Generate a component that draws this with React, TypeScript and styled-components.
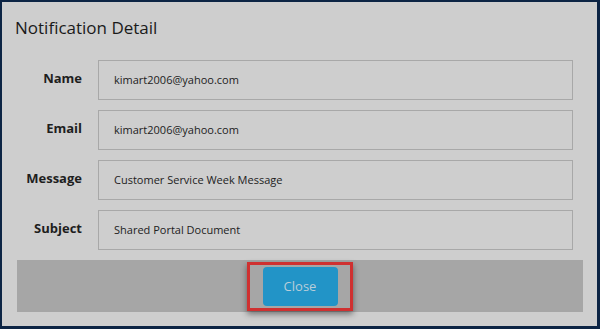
import React from "react"
import styled, { createGlobalStyle } from "styled-components"

const GlobalStyle = createGlobalStyle`
  html, body {
    margin: 0;
    padding: 0;
    background: #cecece;
  }
  body {
    font-family: "Open Sans", "Liberation Sans", sans-serif;
  }
`

const fields = [
  { label: "Name", value: "kimart2006@yahoo.com" },
  { label: "Email", value: "kimart2006@yahoo.com" },
  { label: "Message", value: "Customer Service Week Message" },
  { label: "Subject", value: "Shared Portal Document" },
]

export default function App() {
  return (
    <>
      <GlobalStyle />
      <Styled.Modal>
        <Styled.Title>Notification Detail</Styled.Title>
        <Styled.Form>
          {fields.map((f) => (
            <Styled.Row key={f.label}>
              <Styled.Label>{f.label}</Styled.Label>
              <Styled.Field>{f.value}</Styled.Field>
            </Styled.Row>
          ))}
        </Styled.Form>
        <Styled.Footer>
          <Styled.Highlight>
            <Styled.Button>Close</Styled.Button>
          </Styled.Highlight>
        </Styled.Footer>
      </Styled.Modal>
    </>
  )
}

const Styled = {
  Modal: styled.div`
    box-sizing: border-box;
    width: 600px;
    height: 329px;
    background: #cecece;
    border-style: solid;
    border-color: #0c2444;
    border-width: 2px 3px 3px 2px;
    display: flex;
    flex-direction: column;
  `,
  Title: styled.h2`
    margin: 0;
    height: 58px;
    box-sizing: border-box;
    padding: 14px 0 0 13px;
    font-size: 17px;
    line-height: 23px;
    font-weight: 500;
    color: #1a1a1a;
  `,
  Form: styled.div`
    display: flex;
    flex-direction: column;
    gap: 10px;
    padding-right: 24px;
  `,
  Row: styled.div`
    display: grid;
    grid-template-columns: 80px 1fr;
    column-gap: 16px;
    align-items: center;
    height: 40px;
  `,
  Label: styled.div`
    text-align: right;
    font-size: 13px;
    font-weight: 700;
    color: #1e1e1e;
    margin-top: -4px;
  `,
  Field: styled.div`
    box-sizing: border-box;
    height: 40px;
    border: 1px solid #a8a8a8;
    padding: 0 15px 2px;
    display: flex;
    align-items: center;
    font-size: 11px;
    color: #222;
  `,
  Footer: styled.div`
    margin: 10px 14px 0 15px;
    height: 52px;
    background: #a6a6a6;
    display: flex;
    justify-content: center;
    align-items: center;
  `,
  Highlight: styled.div`
    box-sizing: border-box;
    width: 106px;
    height: 49px;
    border: 3px solid #cf3030;
    box-shadow: 0 3px 6px rgba(0, 0, 0, 0.45);
    display: flex;
    justify-content: center;
    align-items: center;
    margin-top: 1px;
  `,
  Button: styled.button`
    width: 75px;
    height: 39px;
    border: none;
    border-radius: 4px;
    background: #2294c7;
    color: #b9cdd9;
    font-family: "Open Sans", "Liberation Sans", sans-serif;
    font-size: 13px;
    padding: 0 0 2px;
    cursor: pointer;
  `,
}
